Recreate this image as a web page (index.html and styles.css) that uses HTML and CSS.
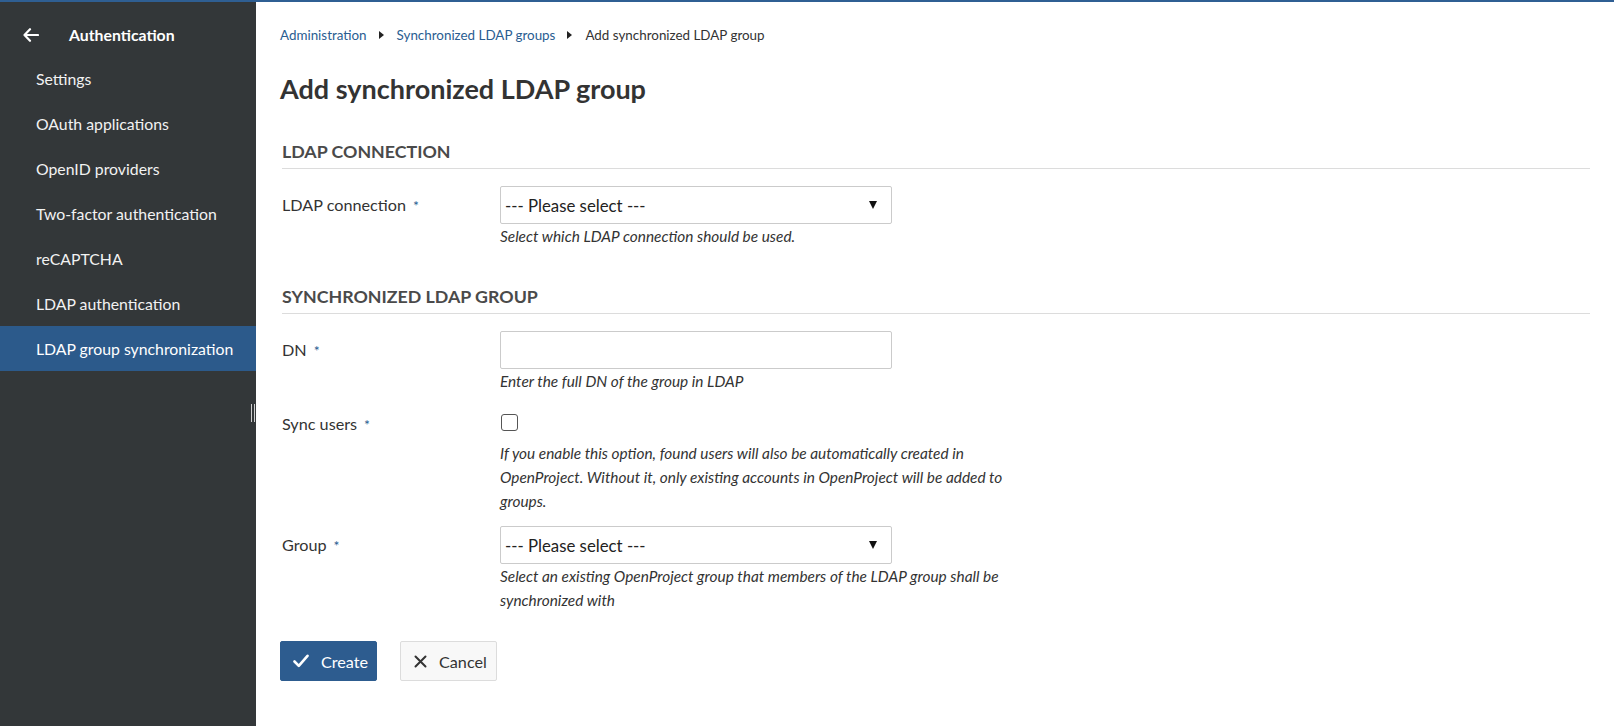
FILE: index.html
```html
<!DOCTYPE html>
<html lang="en">
<head>
<meta charset="utf-8">
<title>Add synchronized LDAP group</title>
<link rel="stylesheet" href="styles.css">
</head>
<body>
<div class="topline"></div>
<div class="layout">
  <aside class="sidebar">
    <div class="sidebar-head">
      <svg class="back-icon" width="16" height="14" viewBox="0 0 16 14"><path d="M7 1.2 L1.5 7 L7 12.8 M1.5 7 H15" fill="none" stroke="#fff" stroke-width="2.2" stroke-linecap="round" stroke-linejoin="round"/></svg>
      <span class="sidebar-title">Authentication</span>
    </div>
    <nav class="menu">
      <a class="menu-item">Settings</a>
      <a class="menu-item">OAuth applications</a>
      <a class="menu-item">OpenID providers</a>
      <a class="menu-item">Two-factor authentication</a>
      <a class="menu-item">reCAPTCHA</a>
      <a class="menu-item">LDAP authentication</a>
      <a class="menu-item active">LDAP group synchronization</a>
    </nav>
    <div class="resizer"></div>
  </aside>
  <main class="content">
    <div class="breadcrumb">
      <a class="crumb-link">Administration</a>
      <span class="crumb-sep"></span>
      <a class="crumb-link">Synchronized LDAP groups</a>
      <span class="crumb-sep"></span>
      <span class="crumb-current">Add synchronized LDAP group</span>
    </div>
    <h1 class="title">Add synchronized LDAP group</h1>

    <section class="form-section first">
      <h2 class="section-title">LDAP connection</h2>
      <div class="form-row">
        <label class="form-label">LDAP connection<span class="req">*</span></label>
        <div class="form-field">
          <div class="select"><span>--- Please select ---</span><span class="caret"></span></div>
          <p class="help">Select which LDAP connection should be used.</p>
        </div>
      </div>
    </section>

    <section class="form-section second">
      <h2 class="section-title">Synchronized LDAP group</h2>
      <div class="form-row">
        <label class="form-label">DN<span class="req">*</span></label>
        <div class="form-field">
          <div class="input"></div>
          <p class="help">Enter the full DN of the group in LDAP</p>
        </div>
      </div>
      <div class="form-row sync">
        <label class="form-label">Sync users<span class="req">*</span></label>
        <div class="form-field">
          <div class="checkbox"></div>
          <p class="help wide">If you enable this option, found users will also be automatically created in OpenProject. Without it, only existing accounts in OpenProject will be added to groups.</p>
        </div>
      </div>
      <div class="form-row group">
        <label class="form-label">Group<span class="req">*</span></label>
        <div class="form-field">
          <div class="select"><span>--- Please select ---</span><span class="caret"></span></div>
          <p class="help wide">Select an existing OpenProject group that members of the LDAP group shall be synchronized with</p>
        </div>
      </div>
    </section>

    <div class="actions">
      <button class="btn primary"><svg width="16" height="14" viewBox="0 0 16 14"><path d="M1.5 7.5 L5.8 11.8 L14.5 1.8" fill="none" stroke="#fff" stroke-width="2.6" stroke-linecap="round" stroke-linejoin="round"/></svg>Create</button>
      <button class="btn secondary"><svg width="13" height="13" viewBox="0 0 13 13"><path d="M1.5 1.5 L11.5 11.5 M11.5 1.5 L1.5 11.5" fill="none" stroke="#333" stroke-width="2" stroke-linecap="round"/></svg>Cancel</button>
    </div>
  </main>
</div>
</body>
</html>
```

FILE: styles.css
```css
html, body {
  margin: 0;
  padding: 0;
  height: 100%;
}
body {
  font-family: Lato, "Open Sans", "Liberation Sans", sans-serif;
  color: #333;
  background: #fff;
  overflow: hidden;
}
.topline {
  height: 2px;
  background: #2f5f93;
}
.layout {
  display: flex;
  height: calc(100% - 2px);
}
.sidebar {
  position: relative;
  width: 256px;
  flex: none;
  background: #333739;
  color: #fff;
}
.sidebar-head {
  display: flex;
  align-items: center;
  height: 54px;
  padding: 12px 0 0 23px;
  box-sizing: border-box;
}
.back-icon {
  display: block;
}
.sidebar-title {
  margin-left: 30px;
  font-weight: 700;
  font-size: 15.8px;
  line-height: 20px;
}
.menu {
  display: flex;
  flex-direction: column;
}
.menu-item {
  display: flex;
  align-items: center;
  height: 45px;
  padding-left: 36px;
  font-size: 15.8px;
  color: #f2f2f2;
}
.menu-item.active {
  background: #2c5a8b;
  color: #fff;
}
.resizer {
  position: absolute;
  right: 1px;
  top: 402px;
  width: 4px;
  height: 18px;
  border-left: 1px solid #cfcfcf;
  border-right: 1px solid #cfcfcf;
  box-sizing: border-box;
}
.content {
  flex: 1;
  padding: 23px 24px 0 24px;
  min-width: 0;
}
.breadcrumb {
  display: flex;
  align-items: center;
  font-size: 13.4px;
  height: 20px;
}
.crumb-link {
  color: #2a5d91;
}
.crumb-current {
  color: #333;
}
.crumb-sep {
  width: 0;
  height: 0;
  border-top: 4.5px solid transparent;
  border-bottom: 4.5px solid transparent;
  border-left: 5px solid #222;
  margin: 0 13px 0 12px;
}
.title {
  margin: 27px 0 0 0;
  font-size: 27px;
  font-weight: 700;
  line-height: 34px;
  color: #333;
}
.form-section {
  margin: 0 0 0 2px;
}
.section-title {
  margin: 33px 0 0 0;
  font-size: 17.8px;
  font-weight: 700;
  text-transform: uppercase;
  color: #4a4a4a;
  line-height: 24px;
  padding-bottom: 5px;
  border-bottom: 1px solid #dcdcdc;
}
.second .section-title {
  margin-top: 36px;
}
.form-row {
  display: flex;
  margin-top: 17px;
}
.form-label {
  width: 218px;
  flex: none;
  font-size: 16.2px;
  line-height: 20px;
  padding-top: 9px;
  color: #333;
}
.req {
  color: #2a5d91;
  margin-left: 7px;
  font-size: 14px;
}
.form-field {
  display: flex;
  flex-direction: column;
}
.select, .input {
  width: 392px;
  height: 38px;
  box-sizing: border-box;
  border: 1px solid #cbcbcb;
  border-radius: 2px;
  background: #fff;
}
.select {
  display: flex;
  align-items: center;
  justify-content: space-between;
  padding: 0 14px 0 4px;
  font-size: 16.8px;
  color: #222;
}
.caret {
  width: 0;
  height: 0;
  border-left: 4.5px solid transparent;
  border-right: 4.5px solid transparent;
  border-top: 8px solid #111;
}
.help {
  margin: 0;
  font-size: 15.4px;
  font-style: italic;
  line-height: 24px;
  color: #333;
}
.help.wide {
  width: 536px;
}
.sync {
  margin-top: 21px;
}
.sync .form-label {
  padding-top: 0;
}
.checkbox {
  width: 17px;
  height: 17px;
  box-sizing: border-box;
  border: 1px solid #555;
  border-radius: 3px;
  margin: 0 0 0 1px;
}
.sync .help {
  margin-top: 10px;
}
.group {
  margin-top: 13px;
}
.actions {
  display: flex;
  gap: 23px;
  margin-top: 29px;
}
.btn {
  display: flex;
  align-items: center;
  gap: 12px;
  height: 40px;
  padding: 0 0 0 12px;
  font-family: Lato, "Open Sans", "Liberation Sans", sans-serif;
  font-size: 16.2px;
  border-radius: 2px;
  box-sizing: border-box;
  cursor: pointer;
}
.btn.primary {
  background: #2d5c8f;
  color: #fff;
  border: 1px solid #2d5c8f;
  width: 97px;
}
.btn.secondary {
  background: #f8f8f8;
  color: #333;
  border: 1px solid #dcdcdc;
  width: 97px;
  padding-left: 13px;
}
```
